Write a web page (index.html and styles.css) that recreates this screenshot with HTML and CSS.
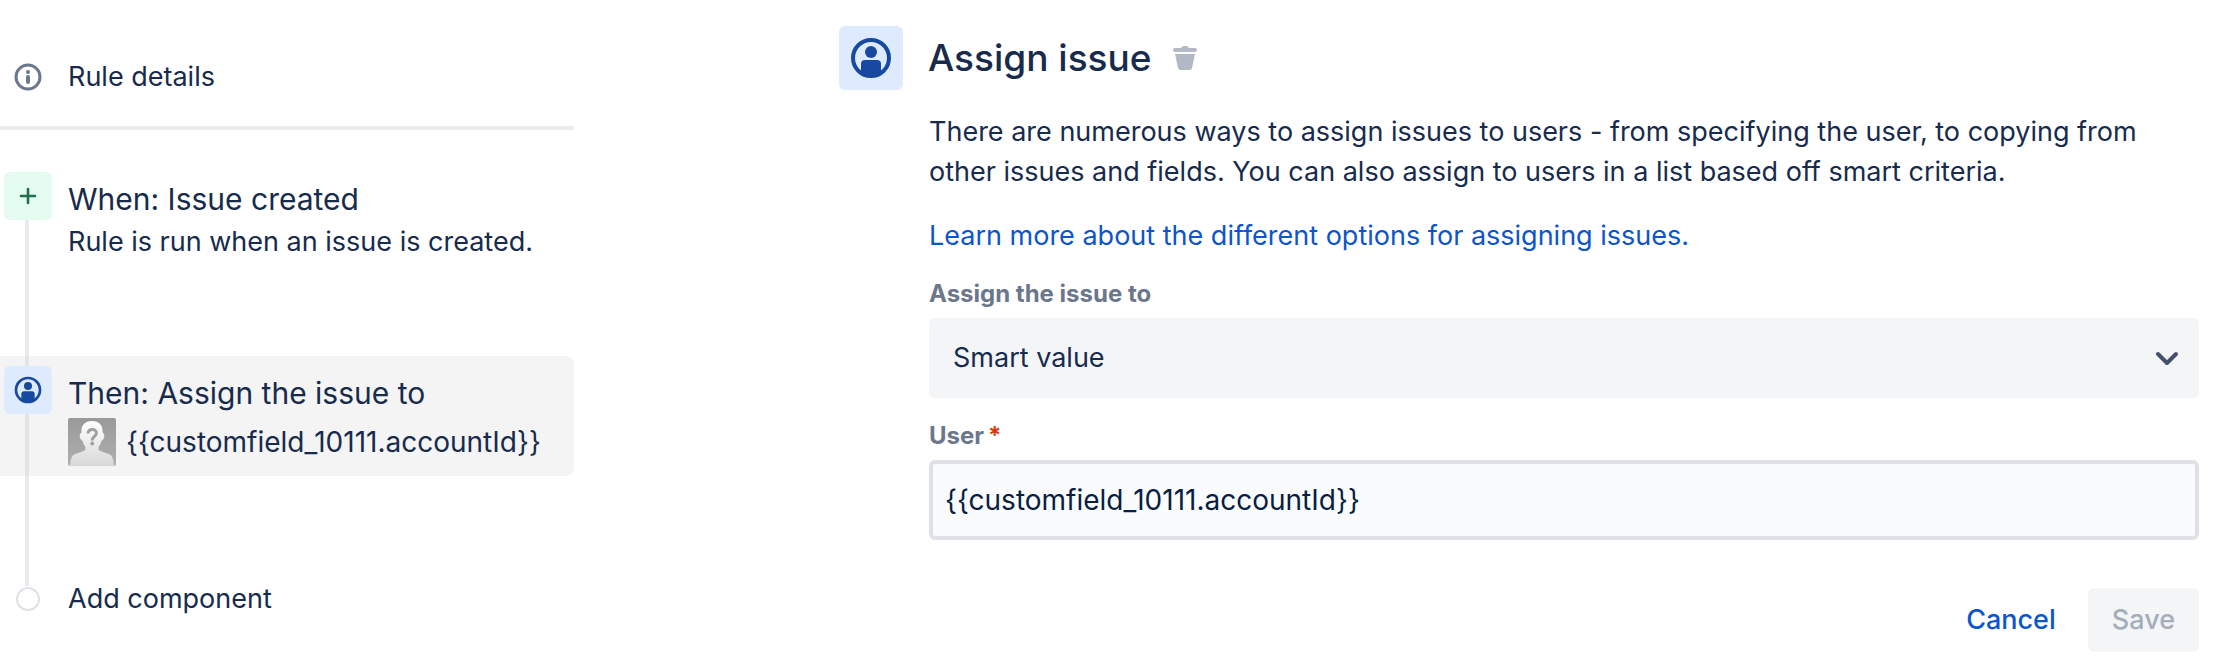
FILE: index.html
```
<!DOCTYPE html>
<html lang="en">
<head>
  <meta charset="UTF-8">
  <meta name="viewport" content="width=device-width, initial-scale=1.0">
  <title>Automation rule</title>
  <link rel="stylesheet" href="styles.css">
</head>
<body>
  <div class="page">
    <aside class="sidebar">
      <div class="rule-details">
        <svg class="info-icon" viewBox="0 0 28 28" aria-hidden="true">
          <circle cx="14" cy="14" r="12" fill="none" stroke="#6b778c" stroke-width="3"/>
          <circle cx="14" cy="9" r="2" fill="#6b778c"/>
          <path d="M14 14v5" stroke="#6b778c" stroke-width="4" stroke-linecap="round"/>
        </svg>
        <span>Rule details</span>
      </div>

      <div class="step trigger">
        <div class="rail">
          <div class="step-icon green">
            <svg width="20" height="20" viewBox="0 0 20 20" aria-hidden="true">
              <path d="M10 3v14M3 10h14" stroke="#216e4e" stroke-width="2.6" stroke-linecap="round"/>
            </svg>
          </div>
          <div class="line"></div>
        </div>
        <div class="step-body">
          <h2>When: Issue created</h2>
          <p>Rule is run when an issue is created.</p>
        </div>
      </div>

      <div class="step selected">
        <div class="rail">
          <div class="line short"></div>
          <div class="step-icon blue">
            <svg width="28" height="28" viewBox="0 0 42 42" aria-hidden="true">
              <circle cx="21" cy="21" r="18" fill="none" stroke="#1849a0" stroke-width="4"/>
              <circle cx="21" cy="15" r="6" fill="#1849a0"/>
              <path d="M11 36V27a4 4 0 0 1 4-4h12a4 4 0 0 1 4 4v9a19 19 0 0 1-20 0z" fill="#1849a0"/>
            </svg>
          </div>
          <div class="line"></div>
        </div>
        <div class="step-body">
          <h2>Then: Assign the issue to</h2>
          <div class="assignee">
            <svg class="avatar" viewBox="0 0 48 48" aria-hidden="true">
              <defs>
                <linearGradient id="back" x1="0" y1="0" x2="0" y2="1">
                  <stop offset="0" stop-color="#999"/>
                  <stop offset="1" stop-color="#b0b0b0"/>
                </linearGradient>
                <linearGradient id="person" x1="0" y1="0" x2="0" y2="1">
                  <stop offset="0" stop-color="#fff"/>
                  <stop offset="1" stop-color="#d8d8d8"/>
                </linearGradient>
              </defs>
              <rect width="48" height="48" rx="2" fill="url(#back)"/>
              <path d="M24 3c-7 0-11 4-10.500 11-.2 1-2 1.500-1.800 4 .2 2.500 1.500 4.500 3 5 .5 3 1.500 4.500 2.800 6 0 3-.5 3.500-2.500 4.300L6 36.500C3.500 38 2.500 42 2 48h44c-.5-6-1.500-10-4-11.500l-9-3.200c-2-.8-2.500-1.300-2.500-4.300 1.300-1.500 2.300-3 2.800-6 1.500-.5 2.800-2.500 3-5 .2-2.500-1.600-3-1.800-4C35 7 31 3 24 3z" fill="url(#person)"/>
              <path d="M20 15.500c0-5.500 8.500-5 8.500-.5 0 3.500-4.300 3.500-4.300 7.500" fill="none" stroke="#a0a0a0" stroke-width="3"/>
              <circle cx="24.200" cy="25.500" r="1.900" fill="#a0a0a0"/>
            </svg>
            <span>{{customfield_10111.accountId}}</span>
          </div>
        </div>
      </div>

      <div class="connector"></div>
      <button type="button" class="add-component">
        <span class="dot"></span>
        <span>Add component</span>
      </button>
    </aside>

    <main class="config">
      <header class="config-header">
        <div class="config-icon">
          <svg width="46" height="46" viewBox="0 0 46 46" aria-hidden="true">
            <circle cx="23" cy="23" r="18" fill="none" stroke="#1849a0" stroke-width="4"/>
            <circle cx="23" cy="17" r="6" fill="#1849a0"/>
            <path d="M13 38V29a4 4 0 0 1 4-4h12a4 4 0 0 1 4 4v9a19 19 0 0 1-20 0z" fill="#1849a0"/>
          </svg>
        </div>
        <h1>Assign issue</h1>
        <button type="button" class="delete" aria-label="Delete">
          <svg width="24" height="24" viewBox="0 0 24 24" aria-hidden="true">
            <path d="M2 2h6q1-2 3-2h2q2 0 3 2h6a2 2 0 0 1 0 4H2a2 2 0 0 1 0-4z" fill="#b3b9c4"/>
            <path d="M2 8h20l-3 14q-.5 2-2.500 2h-9Q5.500 24 5 22z" fill="#b3b9c4"/>
          </svg>
        </button>
      </header>

      <form class="config-form">
        <p class="description">There are numerous ways to assign issues to users - from specifying the user, to copying from other issues and fields. You can also assign to users in a list based off smart criteria.</p>
        <p class="learn-more"><a href="#">Learn more about the different options for assigning issues.</a></p>

        <div class="form-group">
          <label for="assignTo">Assign the issue to</label>
          <div class="select-wrap">
            <select id="assignTo" name="assignTo">
              <option>Smart value</option>
            </select>
            <svg class="chevron" width="24" height="16" viewBox="0 0 24 16" aria-hidden="true">
              <path d="M3 4l9 9 9-9" fill="none" stroke="#42526e" stroke-width="4" stroke-linecap="round" stroke-linejoin="round"/>
            </svg>
          </div>
        </div>

        <div class="form-group">
          <label for="user">User<span class="required">*</span></label>
          <input type="text" id="user" name="user" value="{{customfield_10111.accountId}}">
        </div>

        <div class="actions">
          <button type="button" class="cancel">Cancel</button>
          <button type="submit" class="save" disabled>Save</button>
        </div>
      </form>
    </main>
  </div>
</body>
</html>
```
FILE: styles.css
```
* {
  box-sizing: border-box;
}
body {
  margin: 0;
  background-color: #fff;
  color: #172b4d;
  font-family: Inter, "Liberation Sans", sans-serif;
  font-size: 27px;
  line-height: 40px;
}
h1, h2, p {
  margin: 0;
}
button, input, select {
  font: inherit;
  color: inherit;
}
button {
  border: none;
  background: none;
  padding: 0;
  cursor: pointer;
}
.page {
  display: flex;
  align-items: flex-start;
}

/* rule steps */
.sidebar {
  flex: none;
  width: 574px;
}
.rule-details {
  display: flex;
  align-items: center;
  gap: 26px;
  padding: 57px 0 29px 14px;
  border-bottom: 4px solid #ebecf0;
}
.info-icon {
  width: 28px;
  height: 28px;
}
.step {
  display: flex;
  gap: 16px;
  padding-left: 4px;
}
.trigger {
  min-height: 184px;
  margin-top: 42px;
}
.rail {
  display: flex;
  flex-direction: column;
  width: 48px;
  flex: none;
}
.step-icon {
  display: flex;
  align-items: center;
  justify-content: center;
  height: 48px;
  flex: none;
  border-radius: 6px;
}
.green {
  background-color: #e3fcef;
}
.blue {
  background-color: #deebff;
}
.line {
  width: 4px;
  flex: 1;
  margin-left: 21px;
  background-color: #e9eaef;
}
.short {
  flex: none;
  height: 10px;
}
.step-body {
  padding: 4px 0 10px;
}
.step-body h2 {
  font-size: 30px;
  line-height: 46px;
  font-weight: 400;
}
.selected {
  background-color: #f4f4f4;
  border-radius: 0 8px 8px 0;
}
.selected .line {
  background-color: #e3e4e8;
}
.selected .step-body {
  padding-top: 14px;
}
.assignee {
  display: flex;
  align-items: center;
  gap: 10px;
  margin-top: 2px;
  font-size: 28px;
}
.avatar {
  width: 48px;
  height: 48px;
}
.connector {
  width: 4px;
  height: 110px;
  margin-left: 25px;
  background-color: #e9eaef;
}
.add-component {
  display: flex;
  align-items: center;
  gap: 28px;
  height: 26px;
  padding-left: 16px;
}
.dot {
  width: 24px;
  height: 24px;
  border: 2px solid #dfe1e6;
  border-radius: 50%;
}

/* component settings */
.config {
  flex: 1;
  padding: 26px 17px 18px 265px;
}
.config-header {
  display: flex;
  align-items: center;
}
.config-icon {
  display: flex;
  align-items: center;
  justify-content: center;
  width: 64px;
  height: 64px;
  margin-right: 25px;
  background-color: #deebff;
  border-radius: 6px;
}
.config-header h1 {
  font-size: 37px;
  font-weight: 500;
}
.delete {
  display: flex;
  margin-left: 22px;
}
.config-form {
  margin: 22px 0 0 90px;
}
.learn-more {
  margin-top: 24px;
}
.learn-more a {
  color: #0c55cc;
  text-decoration: none;
}
.form-group {
  margin-top: 22px;
}
label {
  display: block;
  margin-bottom: 8px;
  color: #6b778c;
  font-size: 24px;
  line-height: 32px;
  font-weight: 700;
}
.required {
  margin-left: 4px;
  color: #de350b;
}
.select-wrap {
  display: grid;
  align-items: center;
}
.select-wrap select,
.chevron {
  grid-area: 1 / 1;
}
.chevron {
  justify-self: end;
  margin-right: 20px;
  pointer-events: none;
}
select {
  appearance: none;
  width: 100%;
  height: 80px;
  padding: 0 64px 0 24px;
  border: none;
  border-radius: 6px;
  background-color: #f4f5f7;
}
input[type="text"] {
  display: block;
  width: 100%;
  height: 80px;
  padding: 0 12px;
  border: 4px solid #dfe1e6;
  border-radius: 6px;
  background-color: #fafbfc;
  color: #091e42;
  font-size: 28px;
}
.actions {
  display: flex;
  justify-content: flex-end;
  gap: 8px;
  margin-top: 48px;
}
.actions button {
  height: 64px;
  padding: 0 24px;
  border-radius: 6px;
  font-weight: 500;
}
.cancel {
  color: #0c55cc;
}
.save {
  background-color: #f4f5f7;
  color: #a5adba;
  cursor: not-allowed;
}
```
